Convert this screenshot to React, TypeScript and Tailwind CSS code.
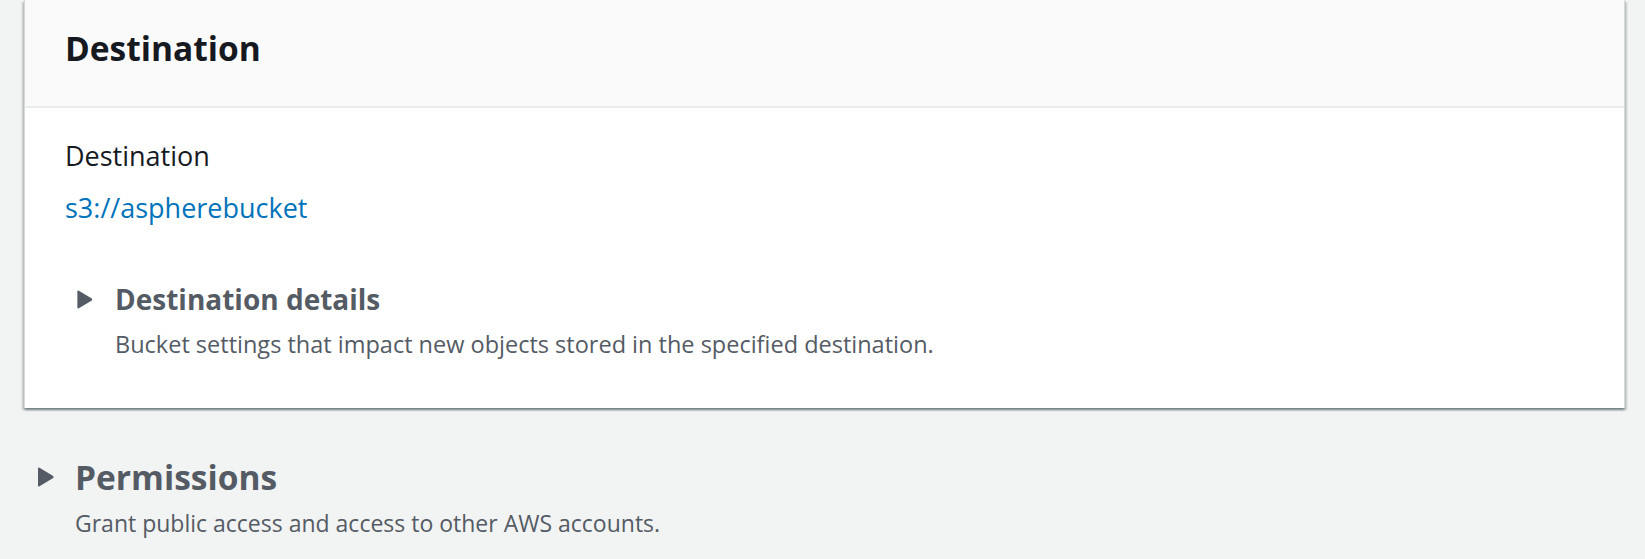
import React from 'react'

function Caret({ className = '' }: { className?: string }) {
  return (
    <svg viewBox="0 0 16 20" className={className} fill="#545b64">
      <path d="M0 1.6 Q0 0 1.5 0.8 L15.2 9 Q16 10 15.2 11 L1.5 19.2 Q0 20 0 18.4 Z" />
    </svg>
  )
}

export default function App() {
  return (
    <div
      className="h-[559px] w-full overflow-hidden bg-[#f2f3f3] pl-[24px] pr-[20px]"
      style={{ fontFamily: '"Open Sans", "Noto Sans", Arial, sans-serif' }}
    >
      {/* Destination card */}
      <div className="bg-white border-l border-r border-[#d5dbdb] shadow-[0_2px_2px_0_rgba(0,28,36,0.35),2px_2px_2px_0_rgba(0,28,36,0.15),-2px_2px_2px_0_rgba(0,28,36,0.15)]">
        <div className="bg-[#fafafa] border-b-2 border-[#eaeded] pl-[40px] pt-[28px] pb-[38px]">
          <h2 className="text-[33.5px] leading-[40px] font-bold text-[#16191f]">Destination</h2>
        </div>
        <div className="pl-[40px] pt-[30px] pb-[48px]">
          <div className="text-[27px] leading-[36px] text-[#16191f]">Destination</div>
          <a className="block mt-[16px] text-[27px] leading-[36px] text-[#0073bb]">s3://aspherebucket</a>

          <div className="mt-[55px] pl-[12px]">
            <div className="flex items-center gap-[22px] h-[36px]">
              <Caret className="w-[16px] h-[19px]" />
              <span className="text-[28px] leading-[36px] font-bold text-[#545b64]">Destination details</span>
            </div>
            <p className="mt-[11px] pl-[38px] text-[23.5px] leading-[32px] text-[#545b64]">
              Bucket settings that impact new objects stored in the specified destination.
            </p>
          </div>
        </div>
      </div>

      {/* Permissions */}
      <div className="mt-[47px] pl-[14px]">
        <div className="flex items-center gap-[21px] h-[44px]">
          <Caret className="w-[16px] h-[20px]" />
          <span className="text-[33.5px] leading-[44px] font-bold text-[#545b64]">Permissions</span>
        </div>
        <p className="mt-[8px] pl-[37px] text-[23px] leading-[32px] text-[#545b64]">
          Grant public access and access to other AWS accounts.
        </p>
      </div>
    </div>
  )
}
